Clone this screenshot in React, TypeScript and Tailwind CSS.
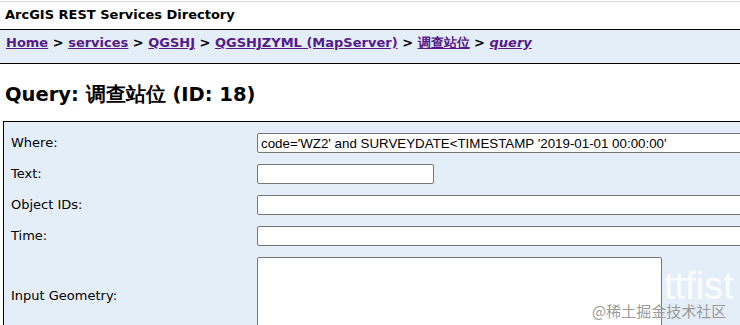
import React from "react";

const rows = [
  { label: "Where:", value: "code='WZ2' and SURVEYDATE<TIMESTAMP '2019-01-01 00:00:00'", w: "w-[560px]" },
  { label: "Text:", value: "", w: "w-[177px]" },
  { label: "Object IDs:", value: "", w: "w-[560px]" },
  { label: "Time:", value: "", w: "w-[560px]" },
];

export default function App() {
  return (
    <div className="relative w-[740px] h-[325px] overflow-hidden bg-white text-black font-['DejaVu_Sans',Verdana,sans-serif]">
      <div className="h-px bg-white" />
      <div className="h-[29px] border-t border-[#d9d9d9] border-b border-b-black px-[5px] pt-[5px] text-[13px] font-bold leading-[16px]">
        ArcGIS REST Services Directory
      </div>
      <div className="h-[34px] bg-[#e4eef8] border-b border-black px-[6px] pt-[5px] text-[13px] font-bold leading-[16px] whitespace-nowrap">
        <a className="underline text-[#551a8b]" href="#">Home</a>
        {" > "}
        <a className="underline text-[#551a8b]" href="#">services</a>
        {" > "}
        <a className="underline text-[#551a8b]" href="#">QGSHJ</a>
        {" > "}
        <a className="underline text-[#551a8b]" href="#">QGSHJZYML (MapServer)</a>
        {" > "}
        <a className="underline text-[#551a8b]" href="#">调查站位</a>
        {" > "}
        <a className="underline italic text-[#551a8b]" href="#">query</a>
      </div>
      <h2 className="mt-[19px] ml-[5px] text-[19.5px] font-bold leading-[24px] whitespace-nowrap">
        Query: 调查站位 (ID: 18)
      </h2>
      <div className="mt-[14px] ml-[3px] w-[800px] bg-[#e4eef8] border border-black pt-[11px] flex flex-col gap-[11px]">
        {rows.map((r) => (
          <div key={r.label} className="flex items-center">
            <div className="w-[253px] shrink-0 pl-[7px] text-[13px] leading-[16px]">{r.label}</div>
            <input
              readOnly
              value={r.value}
              className={`${r.w} shrink-0 h-[20px] bg-white border border-[#767676] rounded-[2px] px-[3px] text-[13.33px] font-['Liberation_Sans',Arial,sans-serif] text-black outline-none`}
            />
          </div>
        ))}
        <div className="flex items-center">
          <div className="w-[253px] shrink-0 pl-[7px] text-[13px] leading-[16px]">Input Geometry:</div>
          <textarea
            readOnly
            className="w-[405px] shrink-0 h-[78px] bg-white border border-[#767676] rounded-[2px] resize-none outline-none"
          />
        </div>
      </div>
      <div className="absolute left-[664px] top-[271px] text-[38px] leading-[30px] text-white/85 font-['Liberation_Sans',sans-serif]">
        ttfist
      </div>
      <div className="absolute left-[592px] top-[302px] text-[15px] leading-[18px] text-[#9a9a9a] font-['Noto_Sans_CJK_SC',sans-serif] whitespace-nowrap">
        @稀土掘金技术社区
      </div>
    </div>
  );
}
